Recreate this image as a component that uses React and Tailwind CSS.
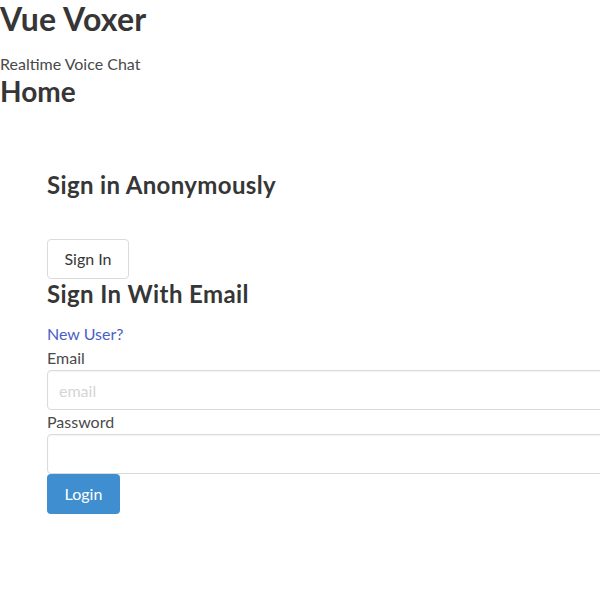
export default function App() {
  return (
    <div className="w-[600px] h-[600px] overflow-hidden bg-white text-[#363636]" style={{ fontFamily: "Lato, 'Noto Sans', sans-serif" }}>
      <h1 className="text-[32px] font-bold leading-[38px] m-0 tracking-[0.2px]">Vue Voxer</h1>
      <p className="mt-[14px] text-[16px] leading-[24px] text-[#4a4a4a]">Realtime Voice Chat</p>
      <h2 className="text-[28px] font-bold leading-[33px] -mt-[1px]">Home</h2>
      <div className="pl-[47px] mt-[62px]">
        <h3 className="text-[24px] font-bold leading-[29px] tracking-[0.35px]">Sign in Anonymously</h3>
        <button className="mt-[40px] h-[40px] w-[82px] border border-[#dbdbdb] rounded-[4px] bg-white text-[16px] text-[#363636] flex items-center justify-center">
          Sign In
        </button>
        <h3 className="text-[24px] font-bold leading-[29px] tracking-[0.4px]">Sign In With Email</h3>
        <div className="mt-[14px] flex flex-col items-start">
          <a className="text-[16px] leading-[24px] text-[#485fc7] cursor-pointer">New User?</a>
          <label className="text-[16px] leading-[24px] text-[#4a4a4a]">Email</label>
          <input
            placeholder="email"
            className="h-[40px] w-[620px] border border-[#dbdbdb] rounded-[4px] px-[11px] text-[16px] shadow-[inset_0_1px_2px_rgba(10,10,10,0.05)] placeholder:text-[#d5d5d5] outline-none"
          />
          <label className="text-[16px] leading-[24px] text-[#4a4a4a]">Password</label>
          <input
            type="password"
            className="h-[40px] w-[620px] border border-[#dbdbdb] rounded-[4px] px-[11px] text-[16px] shadow-[inset_0_1px_2px_rgba(10,10,10,0.05)] outline-none"
          />
          <button className="h-[40px] w-[73px] rounded-[4px] bg-[#3e8ed0] text-white text-[16px] flex items-center justify-center">
            Login
          </button>
        </div>
      </div>
    </div>
  );
}
